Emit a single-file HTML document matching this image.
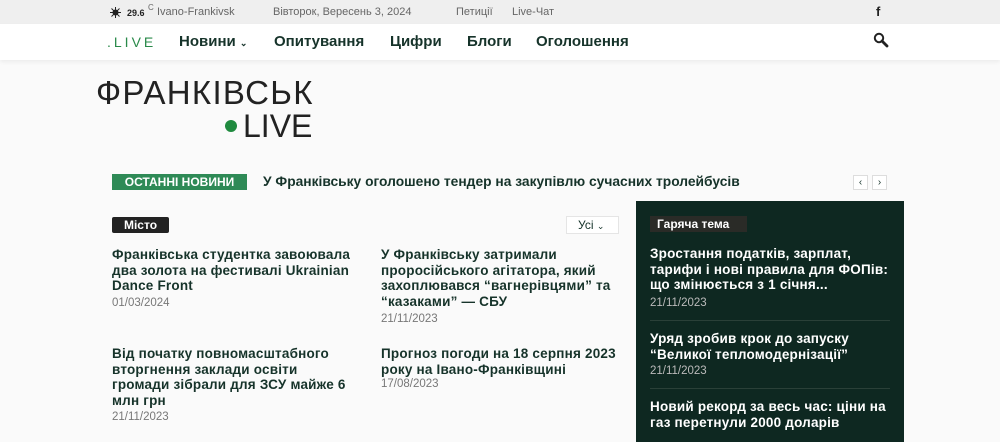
<!DOCTYPE html>
<html><head><meta charset="utf-8"><style>
*{margin:0;padding:0;box-sizing:border-box}
body{width:1000px;height:442px;overflow:hidden;background:#fafafa;font-family:"Liberation Sans",sans-serif;color:#16332a;position:relative}
.top{position:absolute;left:0;top:0;width:1000px;height:24px;background:#efefef;font-size:11px;color:#666}
.top span{position:absolute;top:6px}
.nav{position:absolute;left:0;top:24px;width:1000px;height:36px;background:#fff;box-shadow:0 2px 4px rgba(0,0,0,.06)}
.nav span{position:absolute;top:9px;font-size:15px;font-weight:bold;color:#16332a}
.a{position:absolute}
.h{font-size:13.5px;font-weight:bold;line-height:15.5px;color:#16332a;letter-spacing:0.2px}
.d{font-size:11.5px;color:#777}
.w{color:#fff}
.dk .d{color:#bbb}
</style></head><body>
<div class="top">
<svg style="position:absolute;left:110px;top:7px" width="11" height="11" viewBox="0 0 11 11"><circle cx="5.5" cy="5.5" r="3" fill="#222"/><g stroke="#222" stroke-width="1"><line x1="5.5" y1="0" x2="5.5" y2="11"/><line x1="0" y1="5.5" x2="11" y2="5.5"/><line x1="1.5" y1="1.5" x2="9.5" y2="9.5"/><line x1="9.5" y1="1.5" x2="1.5" y2="9.5"/></g></svg>
<span style="left:127px;top:8px;font-size:9px;font-weight:bold;color:#222">29.6</span><span style="left:148px;top:3px;font-size:8px">C</span>
<span style="left:157px">Ivano-Frankivsk</span>
<span style="left:273px">Вівторок, Вересень 3, 2024</span>
<span style="left:456px">Петиції</span><span style="left:512px">Live-Чат</span>
<span style="left:876px;top:4px;font-weight:bold;font-size:13px;color:#222">f</span>
</div>
<div class="nav">
<span style="left:107px;color:#2a8a4a;font-weight:normal;letter-spacing:3px;font-size:14px;top:10px">.LIVE</span>
<span style="left:179px">Новини <small style="font-size:9px">⌄</small></span>
<span style="left:274px">Опитування</span>
<span style="left:390px">Цифри</span>
<span style="left:467px">Блоги</span>
<span style="left:536px">Оголошення</span>
<svg style="position:absolute;left:873px;top:8px" width="16" height="16" viewBox="0 0 16 16"><circle cx="6" cy="6" r="4.2" fill="none" stroke="#222" stroke-width="2"/><line x1="9" y1="9" x2="14" y2="14" stroke="#222" stroke-width="2.8" stroke-linecap="round"/></svg>
</div>
<div class="a" style="left:96px;top:74px;font-size:33px;color:#222;line-height:38px;letter-spacing:1.3px">ФРАНКІВСЬК</div>
<div class="a" style="left:225px;top:120px;width:12px;height:12px;border-radius:50%;background:#1f8a3f"></div>
<div class="a" style="left:243px;top:107px;font-size:32px;color:#222;line-height:38px">LIVE</div>
<div class="a" style="left:112px;top:174px;width:135px;height:16px;background:#2e8a56;color:#fff;font-size:12px;font-weight:bold;text-align:center;line-height:16px">ОСТАННІ НОВИНИ</div>
<div class="a h" style="left:263px;top:174px;font-size:13.8px;letter-spacing:0">У Франківську оголошено тендер на закупівлю сучасних тролейбусів</div>
<div class="a" style="left:853px;top:175px;width:15px;height:15px;background:#fff;border:1px solid #ddd;font-size:10px;text-align:center;line-height:13px">‹</div>
<div class="a" style="left:872px;top:175px;width:15px;height:15px;background:#fff;border:1px solid #ddd;font-size:10px;text-align:center;line-height:13px">›</div>
<div class="a" style="left:112px;top:217px;width:57px;height:16px;background:#222;color:#fff;font-size:12px;font-weight:bold;text-align:center;line-height:16px;border-radius:2px">Місто</div>
<div class="a" style="left:566px;top:216px;width:53px;height:18px;background:#fff;border:1px solid #e5e5e5;font-size:12px;line-height:16px;padding-left:11px">Усі <small style="font-size:9px">⌄</small></div>
<div class="a h" style="left:112px;top:247px;width:245px">Франківська студентка завоювала два золота на фестивалі Ukrainian Dance Front</div>
<div class="a d" style="left:112px;top:297px">01/03/2024</div>
<div class="a h" style="left:381px;top:247px;width:232px">У Франківську затримали проросійського агітатора, який захоплювався “вагнерівцями” та “казаками” — СБУ</div>
<div class="a d" style="left:381px;top:313px">21/11/2023</div>
<div class="a h" style="left:112px;top:346px;width:240px">Від початку повномасштабного вторгнення заклади освіти громади зібрали для ЗСУ майже 6 млн грн</div>
<div class="a d" style="left:112px;top:411px">21/11/2023</div>
<div class="a h" style="left:381px;top:346px;width:240px">Прогноз погоди на 18 серпня 2023 року на Івано-Франківщині</div>
<div class="a d" style="left:381px;top:378px">17/08/2023</div>
<div class="a dk" style="left:636px;top:201px;width:268px;height:241px;background:#0e2821">
<div class="a" style="left:14px;top:15px;width:97px;height:16px;background:#2a2b27;color:#fff;font-size:12px;font-weight:bold;line-height:16px;padding-left:7px">Гаряча тема</div>
<div class="a h w" style="left:14px;top:45px;width:245px">Зростання податків, зарплат, тарифи і нові правила для ФОПів: що змінюється з 1 січня...</div>
<div class="a d" style="left:14px;top:96px">21/11/2023</div>
<div class="a" style="left:14px;top:119px;width:240px;height:1px;background:#2a4038"></div>
<div class="a h w" style="left:14px;top:130px;width:245px">Уряд зробив крок до запуску “Великої тепломодернізації”</div>
<div class="a d" style="left:14px;top:164px">21/11/2023</div>
<div class="a" style="left:14px;top:187px;width:240px;height:1px;background:#2a4038"></div>
<div class="a h w" style="left:14px;top:198px;width:245px">Новий рекорд за весь час: ціни на газ перетнули 2000 доларів</div>
</div>
</body></html>
